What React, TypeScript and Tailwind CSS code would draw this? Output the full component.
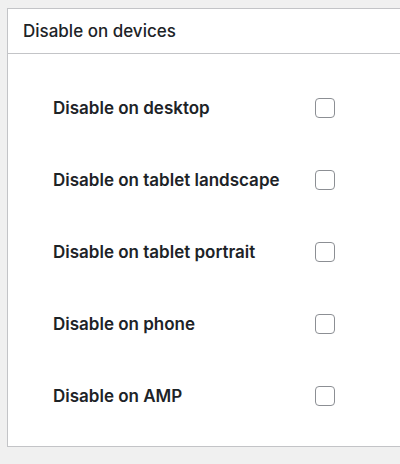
const rows = [
  'Disable on desktop',
  'Disable on tablet landscape',
  'Disable on tablet portrait',
  'Disable on phone',
  'Disable on AMP',
]

export default function App() {
  return (
    <div
      className="h-[464px] w-[400px] overflow-hidden bg-[#f0f0f0] pl-[7px] pt-[8px] text-[#1d2327]"
      style={{ fontFamily: 'Inter, "Noto Sans", sans-serif' }}
    >
      <div className="w-[420px] border border-[#c3c4c7] bg-white">
        <div className="flex h-[45px] items-center border-b border-[#c3c4c7] pl-[15px] pt-[2px] text-[17px] font-medium">
          Disable on devices
        </div>
        <div className="pb-[14px] pt-[18px]">
          {rows.map((r) => (
            <label key={r} className="flex h-[72px] items-center pl-[45px]">
              <span className="w-[262px] pt-[1px] text-[17px] font-semibold">{r}</span>
              <input
                type="checkbox"
                className="h-[20px] w-[20px] appearance-none rounded-[4px] border border-[#8c8f94] bg-white"
              />
            </label>
          ))}
        </div>
      </div>
    </div>
  )
}
